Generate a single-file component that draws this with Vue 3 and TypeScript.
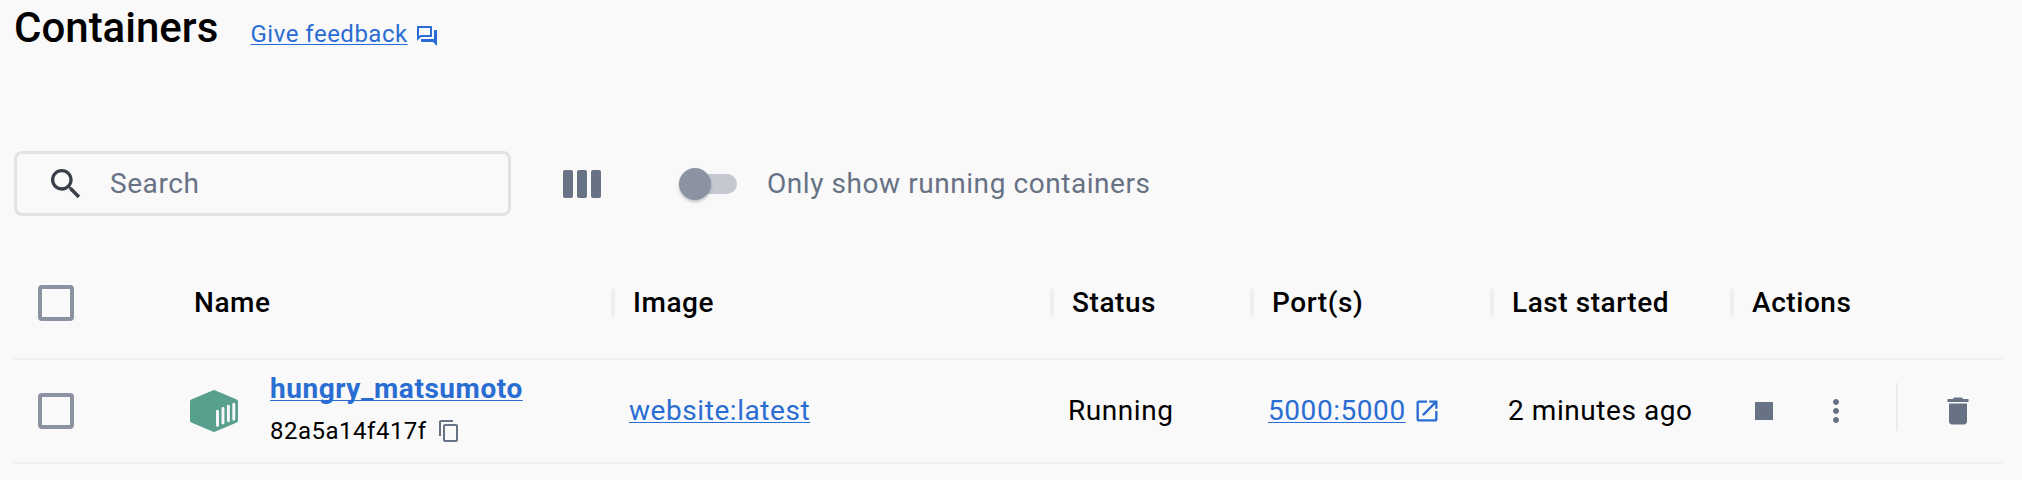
<script setup lang="ts">
interface Container {
  name: string
  id: string
  image: string
  status: string
  ports: string
  started: string
}

const columns: string[] = ['Name', 'Image', 'Status', 'Port(s)', 'Last started', 'Actions']

const containers: Container[] = [
  {
    name: 'hungry_matsumoto',
    id: '82a5a14f417f',
    image: 'website:latest',
    status: 'Running',
    ports: '5000:5000',
    started: '2 minutes ago',
  },
]
</script>

<template>
  <main class="page">
    <header class="heading">
      <h1>Containers</h1>
      <a class="link feedback">Give feedback</a>
      <svg class="feedback-icon" viewBox="0 0 24 24">
        <path d="M15 4v7H5.17L4 12.17V4h11m1-2H3c-.55 0-1 .45-1 1v14l4-4h10c.55 0 1-.45 1-1V3c0-.55-.45-1-1-1zm5 4h-2v9H6v2c0 .55.45 1 1 1h11l4 4V7c0-.55-.45-1-1-1z" />
      </svg>
    </header>

    <section class="toolbar">
      <div class="search">
        <svg class="search-icon" viewBox="0 0 24 24">
          <path d="M15.5 14h-.79l-.28-.27C15.41 12.59 16 11.11 16 9.5 16 5.91 13.09 3 9.5 3S3 5.91 3 9.5 5.91 16 9.5 16c1.61 0 3.09-.59 4.23-1.57l.27.28v.79l5 4.99L20.49 19l-4.99-5zm-6 0C7.01 14 5 11.99 5 9.5S7.01 5 9.5 5 14 7.01 14 9.5 11.99 14 9.5 14z" />
        </svg>
        <span>Search</span>
      </div>
      <div class="columns-icon"><i></i><i></i><i></i></div>
      <div class="toggle"><span class="thumb"></span></div>
      <span class="toggle-label">Only show running containers</span>
    </section>

    <section class="table">
      <div class="row head">
        <div class="cell check"><span class="checkbox"></span></div>
        <div v-for="column in columns" :key="column" class="cell">
          <span>{{ column }}</span>
        </div>
      </div>

      <div v-for="item in containers" :key="item.id" class="row body">
        <div class="cell check"><span class="checkbox"></span></div>
        <div class="cell name-cell">
          <svg class="container-icon" viewBox="0 0 48 42">
            <path fill="#589f8d" d="M22.6.4Q24 -.3 25.4.4L46.8 9.5Q48 10.1 48 11.4V30.6Q48 31.9 46.8 32.5L25.4 41.6Q24 42.3 22.6 41.6L1.2 32.5Q0 31.9 0 30.6V11.4Q0 10.1 1.2 9.5Z" />
            <path stroke="#f9f9fa" stroke-width="2.9" stroke-linecap="round" d="M27.5 21.3V35.5M33 18.5V33M38.4 16.2V30.8M43.8 14.3V29.3" />
          </svg>
          <div class="identity">
            <a class="link name">{{ item.name }}</a>
            <div class="id-line">
              <span>{{ item.id }}</span>
              <svg class="copy-icon" viewBox="0 0 24 24">
                <path d="M16 1H4c-1.1 0-2 .9-2 2v14h2V3h12V1zm3 4H8c-1.1 0-2 .9-2 2v14c0 1.1.9 2 2 2h11c1.1 0 2-.9 2-2V7c0-1.1-.9-2-2-2zm0 16H8V7h11v14z" />
              </svg>
            </div>
          </div>
        </div>
        <div class="cell"><a class="link">{{ item.image }}</a></div>
        <div class="cell">{{ item.status }}</div>
        <div class="cell">
          <a class="link">{{ item.ports }}</a>
          <svg class="open-icon" viewBox="0 0 24 24">
            <path d="M19 19H5V5h7V3H5c-1.11 0-2 .9-2 2v14c0 1.1.89 2 2 2h14c1.1 0 2-.9 2-2v-7h-2v7zM14 3v2h3.59l-9.83 9.83 1.41 1.41L19 6.41V10h2V3h-7z" />
          </svg>
        </div>
        <div class="cell">{{ item.started }}</div>
        <div class="cell actions">
          <svg viewBox="0 0 24 24"><path d="M6 6h12v12H6z" /></svg>
          <svg viewBox="0 0 24 24">
            <path d="M12 8c1.1 0 2-.9 2-2s-.9-2-2-2-2 .9-2 2 .9 2 2 2zm0 2c-1.1 0-2 .9-2 2s.9 2 2 2 2-.9 2-2-.9-2-2-2zm0 6c-1.1 0-2 .9-2 2s.9 2 2 2 2-.9 2-2-.9-2-2-2z" />
          </svg>
          <span class="divider"></span>
          <svg viewBox="0 0 24 24">
            <path d="M6 19c0 1.1.9 2 2 2h8c1.1 0 2-.9 2-2V7H6v12zM19 4h-3.5l-1-1h-5l-1 1H5v2h14V4z" />
          </svg>
        </div>
      </div>
    </section>
  </main>
</template>

<style>
body {
  background: #f9f9fa;
}
</style>

<style scoped>
.page {
  box-sizing: border-box;
  height: 480px;
  padding: 0 20px 0 14px;
  overflow: hidden;
  background: #f9f9fa;
  color: #000;
  font: 400 28px/36px Roboto, sans-serif;
  letter-spacing: 0.56px;
}
.link {
  color: #2a6dd2;
  text-decoration: underline;
  text-decoration-thickness: 1px;
  text-underline-offset: 2px;
  text-decoration-skip-ink: none;
}
svg {
  flex: none;
  display: block;
  fill: currentColor;
}
.heading {
  display: flex;
  height: 151px;
}
h1 {
  width: 236.5px;
  margin: 4px 0 0;
  font-size: 42px;
  line-height: 48px;
  font-weight: 500;
  letter-spacing: 0;
}
.feedback {
  height: 32px;
  margin-top: 18px;
  font-size: 24px;
  line-height: 32px;
  letter-spacing: 0.5px;
}
.feedback-icon {
  width: 24px;
  height: 24px;
  margin: 24px 0 0 7.5px;
  color: #2a6dd2;
}
.toolbar {
  display: flex;
  align-items: center;
  height: 65px;
  color: #677285;
}
.search {
  box-sizing: border-box;
  display: flex;
  align-items: center;
  width: 497px;
  height: 65px;
  padding-left: 29px;
  border: 3px solid #e1e2e6;
  border-radius: 8px;
}
.search-icon {
  width: 40px;
  height: 40px;
  margin-right: 24px;
  color: #393f49;
}
.columns-icon {
  display: flex;
  gap: 4px;
  margin-left: 52px;
}
.columns-icon i {
  width: 10px;
  height: 28px;
  border-radius: 2px;
  background: #677285;
}
.toggle {
  display: flex;
  align-items: center;
  width: 56px;
  height: 20px;
  margin-left: 80px;
  border-radius: 10px;
  background: #c5c8d1;
}
.thumb {
  flex: none;
  width: 32px;
  height: 32px;
  margin-left: -2px;
  border-radius: 50%;
  background: #8b92a2;
  box-shadow: 0 2px 3px rgba(0, 0, 0, 0.22);
}
.toggle-label {
  margin-left: 30px;
}
.table {
  margin-top: 32px;
}
.row {
  box-sizing: border-box;
  display: grid;
  grid-template-columns: 160px 439px 439px 200px 240px 240px 270px;
  border-bottom: 2px solid #eeeff0;
}
.head {
  height: 112px;
  font-weight: 500;
}
.body {
  height: 104px;
}
.cell {
  display: flex;
  align-items: center;
  padding-left: 16px;
  white-space: nowrap;
}
.head .cell {
  padding-left: 20px;
}
.head .cell + .cell + .cell::before {
  content: '';
  width: 4px;
  height: 28px;
  margin: 0 18px 0 -22px;
  background: #eeeff1;
}
.row .check {
  padding-left: 24px;
}
.checkbox {
  box-sizing: border-box;
  width: 36px;
  height: 36px;
  border: 4px solid #8b92a2;
  border-radius: 4px;
}
.container-icon {
  width: 48px;
  height: 42px;
  margin-right: 32px;
}
.identity {
  margin-top: -3px;
}
.name {
  display: block;
  height: 42px;
  font-weight: 700;
}
.id-line {
  display: flex;
  align-items: center;
  height: 36px;
  font-size: 24px;
  letter-spacing: 0.5px;
}
.copy-icon {
  width: 24px;
  height: 24px;
  margin-left: 10px;
  color: #677285;
}
.open-icon {
  width: 28px;
  height: 28px;
  margin-left: 7px;
  color: #2a6dd2;
}
.actions {
  color: #677285;
}
.actions svg {
  width: 36px;
  height: 36px;
}
.actions svg:first-child {
  margin: 0 36px 0 -2px;
}
.divider {
  width: 2px;
  height: 48px;
  margin: -8px 42px 0;
  background: #ebebee;
}
</style>
